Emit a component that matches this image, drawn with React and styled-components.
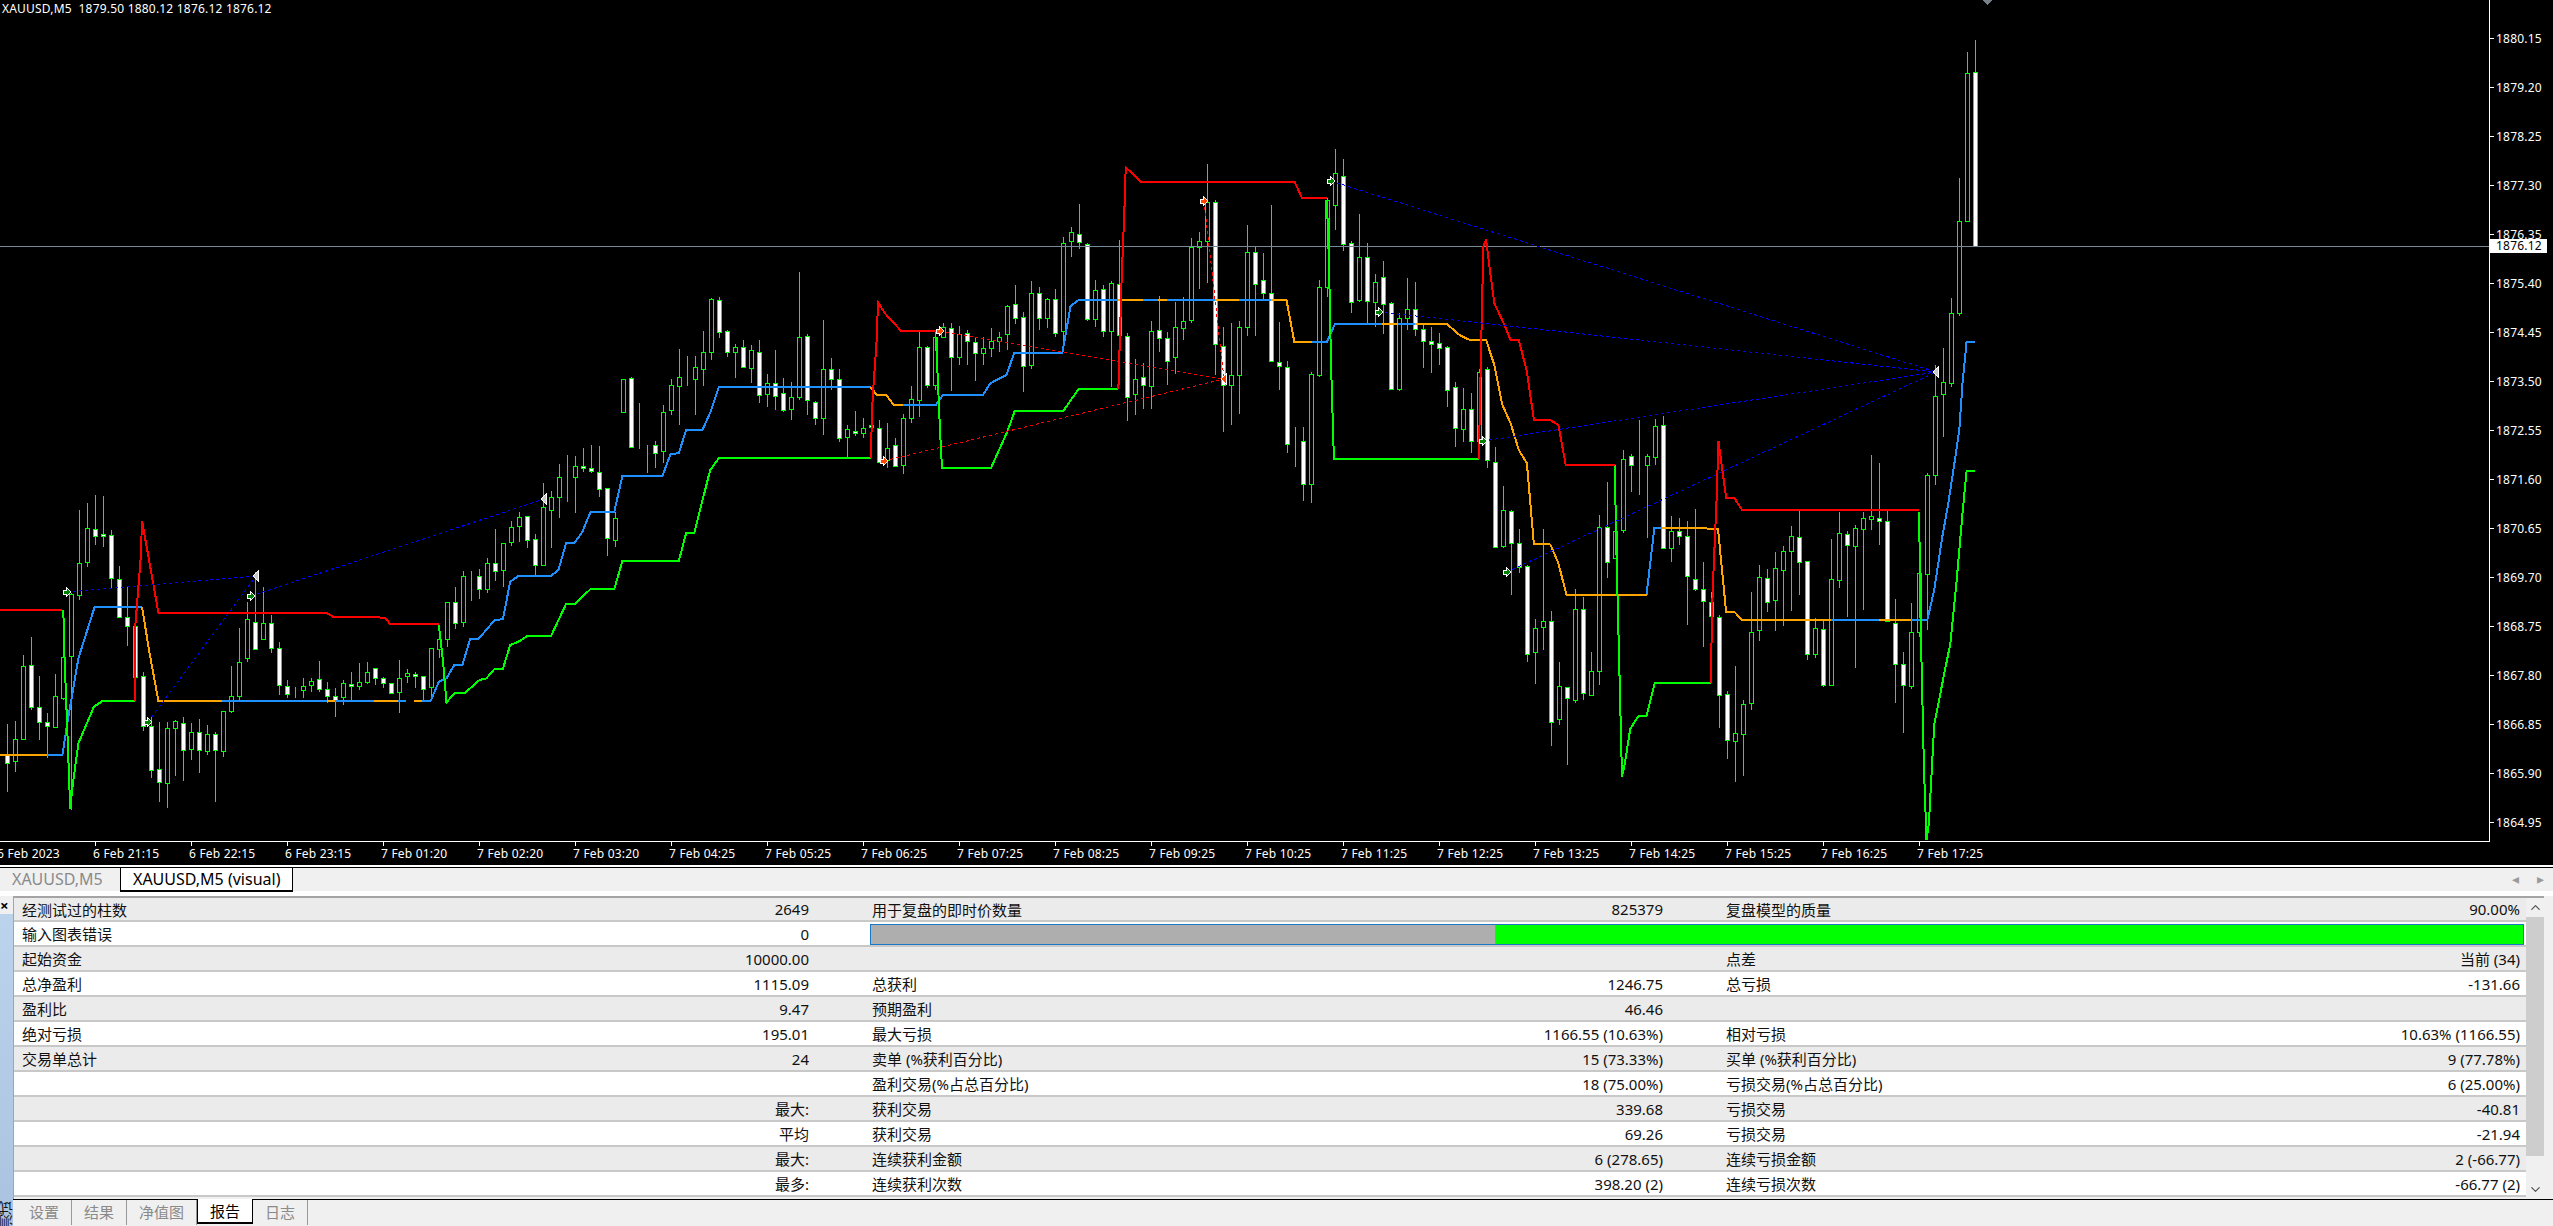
import React from "react";
import styled, { createGlobalStyle } from "styled-components";
import { ChevronUp, ChevronDown } from "lucide-react";

const W = 1;
const H = 0;

// [body type, wick top, body top, body bottom, wick bottom], y read per crop
const crop = (y0, rows) =>
  rows.map(([t, a, b, c, d]) => [t, y0 + a / 3, y0 + b / 3, y0 + c / 3, y0 + d / 3]);

const CANDLES = [
  ...crop(430, [
    [W, 883, 975, 998, 1085], [H, 873, 928, 995, 1025], [H, 675, 708, 928, 930], [W, 622, 706, 833, 840],
    [W, 738, 832, 877, 930], [W, 850, 877, 890, 985], [H, 733, 798, 890, 895], [H, 540, 680, 802, 810],
    [H, 490, 492, 678, 1140], [H, 240, 400, 497, 510], [H, 220, 295, 398, 412], [W, 195, 298, 320, 345],
    [W, 198, 313, 320, 350], [W, 300, 316, 446, 475], [W, 408, 448, 562, 565], [W, 470, 560, 587, 648],
    [W, 575, 587, 740, 745], [W, 725, 737, 888, 902], [W, 858, 887, 1020, 1045], [W, 875, 1018, 1057, 1115],
    [H, 875, 895, 1060, 1133], [H, 870, 873, 895, 1038], [W, 862, 878, 958, 1052], [H, 880, 907, 958, 990],
    [W, 868, 905, 958, 1030], [H, 885, 913, 965, 975], [W, 905, 913, 962, 1115], [H, 842, 842, 962, 980],
    [H, 708, 798, 843, 848], [H, 595, 697, 798, 810], [H, 516, 568, 685, 695], [W, 425, 575, 655, 658],
    [H, 470, 580, 628, 628], [W, 555, 580, 655, 670], [W, 635, 655, 765, 795], [W, 750, 767, 790, 805],
    [H, 770, 782, 782, 805], [H, 745, 767, 778, 805], [H, 745, 752, 765, 785], [W, 693, 748, 778, 785],
    [W, 755, 778, 800, 820], [W, 775, 797, 810, 862], [H, 750, 760, 803, 825], [W, 725, 762, 767, 810],
    [H, 700, 757, 770, 780], [H, 697, 727, 757, 762], [W, 713, 713, 742, 765], [W, 740, 743, 758, 775],
    [W, 758, 758, 787, 790], [H, 690, 745, 787, 850], [H, 717, 730, 740, 760], [W, 725, 732, 737, 775],
    [W, 737, 737, 775, 810], [H, 655, 655, 773, 805], [H, 590, 628, 658, 685], [H, 515, 515, 625, 652],
    [W, 472, 515, 577, 597], [H, 423, 438, 577, 592], [H, 423, 438, 438, 512], [W, 418, 438, 478, 507],
    [H, 385, 400, 478, 490], [W, 297, 400, 425, 452], [H, 340, 340, 422, 470], [H, 272, 292, 338, 348],
    [H, 247, 262, 290, 335], [W, 257, 257, 328, 355], [W, 312, 328, 407, 437], [H, 158, 232, 405, 408],
    [H, 183, 200, 238, 355], [H, 102, 140, 200, 265], [H, 75, 138, 138, 215], [H, 77, 107, 140, 248],
    [W, 55, 107, 112, 125], [W, 45, 115, 125, 128], [W, 48, 125, 175, 200], [W, 175, 175, 325, 378],
    [H, 245, 265, 332, 352], [H, -153, -153, -54, -54], [W, -160, -156, 50, 55], [H, -81, 50, 50, 58],
  ]),
  ...crop(130, [
    [H, 945, 952, 952, 1030], [W, 933, 945, 970, 1015], [H, 825, 845, 962, 1000], [H, 748, 766, 842, 855],
    [H, 657, 740, 767, 885], [H, 678, 742, 742, 768], [H, 678, 710, 745, 855], [H, 603, 665, 715, 768],
    [H, 505, 508, 667, 690], [W, 500, 510, 607, 625], [W, 600, 602, 664, 680], [H, 642, 650, 664, 745],
    [W, 630, 650, 710, 715], [H, 645, 660, 713, 760], [W, 630, 665, 793, 820], [H, 732, 758, 790, 830],
    [W, 660, 760, 800, 840], [W, 745, 790, 842, 845], [H, 755, 800, 835, 870], [H, 427, 620, 800, 810],
    [W, 612, 617, 808, 855], [W, 812, 815, 862, 885], [H, 570, 718, 865, 915], [W, 685, 718, 748, 780],
    [W, 717, 748, 925, 935], [H, 885, 898, 923, 985], [W, 843, 902, 907, 918], [H, 865, 893, 907, 925],
    [W, 820, 885, 892, 935], [W, 870, 893, 995, 1000], [H, 880, 955, 990, 1015], [W, 925, 945, 1008, 1010],
    [H, 852, 865, 1005, 1033], [H, 768, 808, 865, 880], [H, 607, 650, 808, 860], [W, 648, 650, 765, 775],
    [H, 605, 622, 765, 780], [H, 580, 592, 622, 625], [W, 580, 595, 682, 782], [H, 588, 613, 682, 705],
    [W, 600, 610, 635, 705], [W, 625, 637, 670, 752], [H, 622, 655, 670, 705], [H, 595, 633, 655, 682],
    [H, 605, 620, 632, 665], [H, 525, 527, 610, 660], [W, 465, 523, 565, 582], [W, 545, 560, 706, 785],
    [H, 453, 490, 707, 718], [W, 470, 490, 565, 600], [H, 505, 508, 565, 595], [W, 478, 508, 610, 622],
    [H, 322, 338, 602, 650], [H, 290, 307, 335, 380], [W, 222, 313, 338, 358], [W, 338, 342, 568, 572],
    [H, 450, 480, 568, 592], [W, 465, 478, 605, 620], [H, 452, 460, 605, 770], [W, 330, 463, 615, 650],
    [W, 610, 617, 800, 872], [H, 688, 748, 793, 855], [W, 700, 742, 767, 838], [H, 572, 602, 767, 838],
    [W, 498, 600, 625, 665], [W, 605, 625, 695, 765], [H, 517, 592, 683, 733], [H, 502, 572, 592, 630],
    [H, 325, 350, 568, 580], [H, 305, 332, 350, 478], [H, 102, 215, 333, 460], [W, 210, 215, 642, 735],
    [W, 592, 647, 765, 905], [H, 580, 735, 765, 885], [H, 572, 590, 733, 852], [H, 285, 365, 590, 618],
    [W, 352, 365, 460, 618], [W, 370, 450, 490, 510], [W, 225, 490, 693, 695], [W, 577, 695, 708, 780],
    [W, 692, 710, 940, 968], [H, 892, 937, 937, 1012], [W, 892, 932, 1060, 1112], [H, 727, 733, 1062, 1118],
    [H, 450, 472, 737, 740], [H, 205, 210, 470, 500], [H, 57, 130, 225, 300], [W, 87, 137, 340, 362],
    [W, 333, 340, 517, 548], [H, 252, 382, 510, 515], [W, 340, 380, 512, 580], [H, 432, 455, 515, 590],
    [W, 393, 442, 522, 612], [W, 515, 518, 775, 780], [H, 550, 565, 778, 782], [H, 445, 538, 565, 600],
    [W, 457, 538, 598, 618], [W, 585, 598, 634, 714], [W, 592, 632, 640, 730], [W, 608, 638, 652, 705],
    [W, 648, 650, 778, 830], [W, 755, 772, 895, 952], [H, 773, 838, 898, 937], [W, 790, 838, 935, 970],
    [H, 717, 727, 935, 985], [W, 712, 718, 990, 1015],
  ]),
  ...crop(430, [
    [W, 50, 95, 350, 355], [H, 168, 240, 347, 355], [W, 240, 242, 338, 495], [W, 298, 338, 410, 428],
    [W, 405, 407, 670, 695], [H, 568, 595, 667, 762], [H, 297, 573, 592, 660], [W, 543, 572, 875, 947],
    [H, 697, 768, 868, 885], [W, 770, 772, 806, 1005], [H, 478, 538, 810, 820], [W, 500, 538, 790, 810],
    [H, 667, 722, 793, 795], [H, 255, 290, 722, 765], [W, 155, 290, 395, 443], [H, 225, 302, 383, 383],
    [H, 60, 88, 302, 310], [W, 72, 78, 105, 185], [H, -30, 105, 105, 195], [H, 72, 78, 105, 325],
    [H, -32, -12, 82, 105], [W, -42, -14, 355, 358], [H, 257, 302, 352, 395], [W, 265, 302, 317, 345],
    [W, 272, 318, 438, 585], [W, 238, 447, 476, 483], [W, 397, 478, 513, 650], [W, 485, 517, 558, 560],
    [W, 555, 560, 793, 895], [W, 783, 793, 930, 987], [H, 708, 908, 932, 1055], [H, 810, 823, 913, 1037],
    [H, 485, 607, 820, 840], [H, 405, 440, 598, 632], [W, 418, 443, 515, 545], [H, 367, 415, 512, 603],
    [H, 347, 362, 418, 587], [H, 288, 317, 362, 543], [W, 243, 320, 395, 495], [W, 392, 392, 670, 690],
    [H, 565, 593, 670, 685], [W, 568, 598, 765, 770], [H, 327, 448, 765, 768], [H, 245, 308, 448, 475],
    [W, 303, 312, 346, 560], [H, 285, 295, 350, 715], [H, 245, 265, 298, 540], [H, 75, 257, 265, 300],
    [W, 98, 263, 272, 345], [W, 243, 272, 572, 575], [W, 508, 580, 703, 818], [W, 665, 703, 767, 908],
    [H, 520, 607, 770, 778], [H, 372, 430, 607, 620], [H, 130, 135, 433, 600],
  ]),
  [H, 365, 395.7, 475, 485],
  [H, 348, 382, 394, 437],
  [H, 298, 313, 383, 387],
  [H, 178, 221, 313, 316],
  [H, 52, 73, 221, 221],
  [W, 40, 72, 246, 246],
];

// crop coordinates to page coordinates
const at = (x0, y0, sx = 2.45) => (pts) => pts.map(([x, y]) => [x0 + x / sx, y0 + y / 3]);
const Z5 = at(0, 430);
const Z6 = at(640, 130);
const Z7 = at(1280, 130);
const Z9 = at(1280, 430);
const Z10 = at(1920, 430, 2.47);
const Z8 = at(1920, 0, 2.47);
const Z11 = at(640, 430);

const RED_LINES = [
  Z5([[0, 540], [153, 540]]),
  Z5([[330, 813], [330, 610], [345, 380], [348, 272], [388, 548], [800, 548], [815, 560], [918, 560], [945, 565], [955, 581], [1075, 581]]),
  Z6([[565, 985], [570, 800], [580, 630], [583, 517], [600, 550], [640, 603], [735, 603]]),
  Z6([[1172, 776], [1180, 450], [1188, 200], [1190, 112], [1228, 156], [1568, 156]]),
  Z7([[0, 156], [36, 156], [54, 204], [115, 204]]),
  Z7([[487, 987], [492, 700], [498, 350], [505, 328], [512, 400], [525, 520], [548, 580], [565, 630], [585, 630], [605, 725], [622, 870], [662, 870], [682, 885], [700, 1004], [820, 1004]]),
  Z9([[1055, 760], [1060, 480], [1070, 200], [1074, 32], [1093, 203], [1113, 203], [1132, 240], [1565, 240]]),
];

const GREEN_LINES = [
  Z5([[155, 540], [158, 680], [165, 900], [172, 1137], [178, 1065], [192, 940], [230, 830], [252, 812], [330, 812]]),
  Z5([[1075, 585], [1085, 690], [1094, 817], [1115, 788], [1140, 788], [1175, 750], [1192, 745], [1212, 716], [1232, 716], [1250, 645], [1270, 635], [1292, 618], [1350, 618], [1387, 522], [1408, 522], [1447, 477], [1505, 477], [1525, 393], [1568, 393]]),
  Z11([[0, 393], [95, 393], [113, 310], [133, 308], [172, 120], [193, 85], [565, 85]]),
  Z6([[725, 625], [730, 760], [735, 900], [740, 1014], [860, 1014], [900, 905], [918, 843], [1037, 843], [1075, 776], [1172, 776]]),
  Z7([[115, 210], [120, 400], [125, 700], [132, 987], [487, 987]]),
  Z9([[820, 104], [825, 400], [830, 650], [838, 1040], [845, 1000], [858, 897], [878, 858], [898, 858], [918, 760], [1055, 760]]),
  Z9([[1565, 245], [1568, 400]]).concat(Z10([[0, 500], [5, 760], [10, 1020], [16, 1230], [22, 1180], [35, 885], [60, 730], [75, 640], [90, 460], [105, 250], [115, 122], [135, 122]])),
];

const BLUE_LINES = [
  Z5([[115, 975], [153, 975], [165, 880], [192, 685], [232, 530], [348, 530]]),
  Z5([[545, 813], [800, 813]]),
  Z5([[820, 813], [917, 813]]),
  Z5([[975, 813], [995, 813]]),
  Z5([[1035, 813], [1055, 813], [1075, 755], [1094, 745], [1113, 705], [1133, 705], [1152, 627], [1172, 627], [1212, 570], [1232, 568], [1250, 455], [1270, 438], [1350, 438], [1368, 420], [1387, 340], [1408, 338], [1427, 305], [1447, 245], [1505, 245], [1525, 138], [1568, 138]]),
  Z6([[0, 1038], [55, 1038], [75, 972], [95, 970], [113, 900], [153, 900], [173, 845], [193, 771], [565, 771]]),
  Z6([[645, 825], [725, 825], [742, 795], [840, 795], [858, 760], [898, 735], [917, 668], [1035, 668], [1055, 528], [1075, 510], [1172, 510]]),
  Z6([[1232, 510], [1270, 510]]),
  Z6([[1290, 510], [1408, 510]]),
  Z6([[1467, 510], [1545, 510]]),
  Z7([[78, 635], [115, 635], [135, 581], [250, 581]]),
  Z7([[290, 581], [330, 581]]),
  Z9([[898, 495], [917, 295], [935, 295]]),
  Z9([[1350, 570], [1467, 570]]),
  Z9([[1545, 570], [1568, 570]]).concat(
    Z10([[5, 570], [18, 570], [35, 480], [55, 320], [70, 220], [85, 100], [97, 0]]),
    Z8([[105, 1150], [115, 1025], [135, 1025]])
  ),
];

const ORANGE_LINES = [
  Z5([[0, 975], [115, 975]]),
  Z5([[348, 530], [365, 660], [388, 813], [545, 813]]),
  Z5([[800, 813], [820, 813]]),
  Z5([[917, 813], [975, 813]]),
  Z5([[1015, 813], [1035, 813]]),
  Z6([[565, 771], [580, 795], [603, 795], [622, 825], [645, 825]]),
  Z6([[1172, 510], [1232, 510]]),
  Z6([[1270, 510], [1290, 510]]),
  Z6([[1408, 510], [1467, 510]]),
  Z6([[1545, 510], [1568, 510]]),
  Z7([[0, 510], [16, 510], [35, 635], [78, 635]]),
  Z7([[250, 581], [290, 581]]),
  Z7([[330, 581], [408, 581], [440, 615], [465, 630], [505, 630], [525, 705], [545, 825], [565, 880], [585, 960], [605, 1000], [622, 1242], [662, 1242]]),
  Z9([[662, 342], [682, 400], [702, 495], [898, 495]]),
  Z9([[935, 295], [1035, 295], [1073, 297], [1093, 545], [1113, 545], [1132, 570], [1350, 570]]),
  Z9([[1467, 570], [1545, 570]]),
];

const BUY_TRADES = [
  [67, 592, 256, 576],
  [148, 722, 256, 576],
  [251, 596, 544, 499],
  [1331, 181, 1936, 372],
  [1379, 312, 1936, 372],
  [1483, 441, 1936, 372],
  [1507, 572, 1936, 372],
];

const SELL_TRADES = [
  [884, 461, 1224, 379],
  [940, 331, 1224, 379],
  [1204, 201, 1224, 379],
];

const PRICES = [
  "1880.15", "1879.20", "1878.25", "1877.30", "1876.35", "1875.40", "1874.45", "1873.50", "1872.55",
  "1871.60", "1870.65", "1869.70", "1868.75", "1867.80", "1866.85", "1865.90", "1864.95",
];

const TIMES = [
  "6 Feb 2023", "6 Feb 21:15", "6 Feb 22:15", "6 Feb 23:15", "7 Feb 01:20", "7 Feb 02:20", "7 Feb 03:20",
  "7 Feb 04:25", "7 Feb 05:25", "7 Feb 06:25", "7 Feb 07:25", "7 Feb 08:25", "7 Feb 09:25", "7 Feb 10:25",
  "7 Feb 11:25", "7 Feb 12:25", "7 Feb 13:25", "7 Feb 14:25", "7 Feb 15:25", "7 Feb 16:25", "7 Feb 17:25",
];

const REPORT = [
  [["经测试过的柱数", "2649"], ["用于复盘的即时价数量", "825379"], ["复盘模型的质量", "90.00%"]],
  [["输入图表错误", "0"]],
  [["起始资金", "10000.00"], ["", ""], ["点差", "当前 (34)"]],
  [["总净盈利", "1115.09"], ["总获利", "1246.75"], ["总亏损", "-131.66"]],
  [["盈利比", "9.47"], ["预期盈利", "46.46"], ["", ""]],
  [["绝对亏损", "195.01"], ["最大亏损", "1166.55 (10.63%)"], ["相对亏损", "10.63% (1166.55)"]],
  [["交易单总计", "24"], ["卖单 (%获利百分比)", "15 (73.33%)"], ["买单 (%获利百分比)", "9 (77.78%)"]],
  [["", ""], ["盈利交易(%占总百分比)", "18 (75.00%)"], ["亏损交易(%占总百分比)", "6 (25.00%)"]],
  [["", "最大:"], ["获利交易", "339.68"], ["亏损交易", "-40.81"]],
  [["", "平均"], ["获利交易", "69.26"], ["亏损交易", "-21.94"]],
  [["", "最大:"], ["连续获利金额", "6 (278.65)"], ["连续亏损金额", "2 (-66.77)"]],
  [["", "最多:"], ["连续获利次数", "398.20 (2)"], ["连续亏损次数", "-66.77 (2)"]],
];

const BOTTOM_TABS = ["设置", "结果", "净值图", "报告", "日志"];

const toPoints = (pts) => pts.map(([x, y]) => `${x.toFixed(1)},${y.toFixed(1)}`).join(" ");

function Candle({ bar, index }) {
  const [type, top, bodyTop, bodyBottom, bottom] = bar;
  const x = 7 + index * 8;
  return (
    <g>
      <line x1={x + 0.5} x2={x + 0.5} y1={top} y2={bottom} stroke="#00ff00" />
      <rect
        x={x - 1.5}
        y={Math.round(bodyTop) + 0.5}
        width={4}
        height={Math.max(Math.round(bodyBottom - bodyTop), 0)}
        fill={type === W ? "#ffffff" : "#000000"}
        stroke="#00ff00"
      />
    </g>
  );
}

function Band({ lines, color }) {
  return lines.map((pts, i) => (
    <polyline key={i} points={toPoints(pts)} fill="none" stroke={color} strokeWidth={2} />
  ));
}

function EntryArrow({ x, y, color }) {
  return (
    <path
      transform={`translate(${x} ${y})`}
      d="M-4 -2 H-1 V-5 L4 0 L-1 5 V2 H-4 Z"
      fill={color}
      stroke="#ffffff"
    />
  );
}

function Trades({ trades, color, arrow }) {
  return (
    <g>
      {trades.map(([x1, y1, x2, y2]) => (
        <line
          key={`${x1}-${y1}`}
          x1={x1}
          y1={y1}
          x2={x2}
          y2={y2}
          stroke={color}
          strokeDasharray="3 3"
        />
      ))}
      {trades.map(([x1, y1]) => (
        <EntryArrow key={`${x1}-${y1}`} x={x1} y={y1} color={arrow} />
      ))}
    </g>
  );
}

function ExitMark({ x, y, fill }) {
  return (
    <path
      transform={`translate(${x} ${y})`}
      d="M-3 0 L2 -5 V5 Z"
      fill={fill}
      stroke="#ffffff"
    />
  );
}

function PriceChart() {
  return (
    <Plot width={2489} height={841} viewBox="0 0 2489 841" shapeRendering="crispEdges">
      {CANDLES.map((bar, i) => (
        <Candle key={i} bar={bar} index={i} />
      ))}
      <line x1={0} x2={2489} y1={246.5} y2={246.5} stroke="#778899" />
      <polygon points="1983,0 1992,0 1987.5,5" fill="#778088" />
      <Band lines={BLUE_LINES} color="#1e90ff" />
      <Band lines={ORANGE_LINES} color="#ffa500" />
      <Band lines={GREEN_LINES} color="#00ff00" />
      <Band lines={RED_LINES} color="#ff0000" />
      <Trades trades={BUY_TRADES} color="#0000ff" arrow="#008000" />
      <Trades trades={SELL_TRADES} color="#ff0000" arrow="#ff4500" />
      <ExitMark x={256} y={576} fill="#c8c8c8" />
      <ExitMark x={544} y={499} fill="#c8c8c8" />
      <ExitMark x={1936} y={372} fill="#c8c8c8" />
      <ExitMark x={1224} y={379} fill="#ff4500" />
    </Plot>
  );
}

export default function App() {
  return (
    <Page>
      <GlobalStyle />
      <ChartPane>
        <PriceChart />
        <Legend>XAUUSD,M5&nbsp; 1879.50 1880.12 1876.12 1876.12</Legend>
        <PriceAxis>
          {PRICES.map((p) => (
            <PriceLabel key={p}>{p}</PriceLabel>
          ))}
          <PriceBadge>1876.12</PriceBadge>
        </PriceAxis>
        <TimeAxis>
          {TIMES.map((t) => (
            <TimeLabel key={t}>{t}</TimeLabel>
          ))}
        </TimeAxis>
      </ChartPane>

      <ChartTabs>
        <ChartTab>XAUUSD,M5</ChartTab>
        <ChartTab $active>XAUUSD,M5 (visual)</ChartTab>
        <TabArrows>
          <span>◂</span>
          <span>▸</span>
        </TabArrows>
      </ChartTabs>

      <Terminal>
        <SideBar>
          <CloseMark>×</CloseMark>
          <SideTitle>
            <span>测试</span>
          </SideTitle>
        </SideBar>
        <Main>
          <ReportArea>
            <Report>
              {REPORT.map((row, i) => (
                <Row key={i}>
                  {row.map(([label, value], j) => (
                    <Cell key={j}>
                      <span>{label}</span>
                      <span>{value}</span>
                    </Cell>
                  ))}
                  {row.length === 1 && (
                    <QualityCell>
                      <QualityBar>
                        <QualityPart $color="#aeaeae" $width={624} />
                        <QualityPart $color="#00ff00" />
                      </QualityBar>
                    </QualityCell>
                  )}
                </Row>
              ))}
            </Report>
            <ScrollBar>
              <ScrollArrow>
                <ChevronUp size={15} strokeWidth={2} />
              </ScrollArrow>
              <ScrollThumb />
              <ScrollArrow>
                <ChevronDown size={15} strokeWidth={2} />
              </ScrollArrow>
            </ScrollBar>
          </ReportArea>
          <BottomTabs>
            {BOTTOM_TABS.map((t) => (
              <BottomTab key={t} $active={t === "报告"}>
                {t}
              </BottomTab>
            ))}
          </BottomTabs>
        </Main>
      </Terminal>
    </Page>
  );
}

const GlobalStyle = createGlobalStyle`
  html, body {
    margin: 0;
    background: #f0f0f0;
    overflow: hidden;
  }
  * {
    box-sizing: border-box;
  }
`;

const FONT = `"Noto Sans", "Noto Sans CJK SC", sans-serif`;

const Page = styled.div`
  width: 2553px;
  height: 1226px;
  display: flex;
  flex-direction: column;
  overflow: hidden;
  font-family: ${FONT};
`;

const ChartPane = styled.section`
  position: relative;
  flex: none;
  height: 867px;
  display: grid;
  grid-template-columns: 2490px 63px;
  grid-template-rows: 842px 23px;
  background: #000;
  border-bottom: 2px solid #fff;
  overflow: hidden;
  color: #fff;
  font-size: 12px;
  letter-spacing: 0.2px;
`;

const Plot = styled.svg`
  display: block;
  width: 2490px;
  height: 842px;
  border-right: 1px solid #fff;
  border-bottom: 1px solid #fff;
`;

const Legend = styled.div`
  position: absolute;
  left: 2px;
  top: 0;
  line-height: 18px;
  white-space: pre;
`;

const PriceAxis = styled.div`
  position: relative;
  display: flex;
  flex-direction: column;
  padding-top: 14px;
`;

const PriceLabel = styled.div`
  position: relative;
  flex: none;
  height: 49px;
  line-height: 49px;
  padding-left: 6px;

  &::before {
    content: "";
    position: absolute;
    left: -1px;
    top: 24px;
    width: 5px;
    height: 1px;
    background: #fff;
  }
`;

const PriceBadge = styled.div`
  position: absolute;
  left: 0;
  top: 239px;
  width: 57px;
  height: 14px;
  line-height: 14px;
  padding-left: 6px;
  background: #fff;
  color: #000;
`;

const TimeAxis = styled.div`
  grid-column: 1 / -1;
  display: flex;
  margin-left: -3px;
`;

const TimeLabel = styled.div`
  position: relative;
  flex: none;
  width: 96px;
  line-height: 23px;
  white-space: nowrap;

  &::before {
    content: "";
    position: absolute;
    left: 2px;
    top: 0;
    width: 1px;
    height: 4px;
    background: #fff;
  }
`;

const ChartTabs = styled.div`
  flex: none;
  height: 29px;
  display: flex;
  align-items: flex-start;
  border-top: 1px solid #000;
  border-bottom: 5px solid #fff;
  background: #f0f0f0;
  font-size: 16px;
`;

const ChartTab = styled.div`
  height: 24px;
  line-height: 22px;
  padding: 0 12px;
  color: ${({ $active }) => ($active ? "#000" : "#8a8a8a")};
  background: ${({ $active }) => ($active ? "#fff" : "transparent")};
  border: ${({ $active }) => ($active ? "1px solid #000" : "none")};
  border-top: none;
  border-bottom-width: ${({ $active }) => ($active ? "2px" : "0")};
  ${({ $active }) => ($active ? "" : "width: 120px;")}
`;

const TabArrows = styled.div`
  margin-left: auto;
  display: flex;
  gap: 18px;
  padding-right: 9px;
  color: #9a9a9a;
  font-size: 14px;
  line-height: 22px;
`;

const Terminal = styled.div`
  flex: 1;
  min-height: 0;
  display: flex;
  background: #f0f0f0;
  font-size: 15px;
  color: #111;
`;

const SideBar = styled.aside`
  flex: none;
  width: 13px;
  display: flex;
  flex-direction: column;
`;

const CloseMark = styled.div`
  flex: none;
  height: 18px;
  line-height: 19px;
  font-size: 15px;
  font-weight: 700;
  color: #000;
`;

const SideTitle = styled.div`
  flex: 1;
  display: flex;
  justify-content: flex-end;
  align-items: flex-end;
  flex-direction: column;
  background: linear-gradient(#bcd3ec, #a9c3e0);
  overflow: hidden;

  span {
    writing-mode: vertical-rl;
    transform: rotate(180deg);
    font-size: 14px;
    line-height: 13px;
    margin-bottom: -3px;
  }
`;

const Main = styled.div`
  flex: 1;
  min-width: 0;
  display: flex;
  flex-direction: column;
`;

const ReportArea = styled.div`
  flex: none;
  height: 304px;
  display: flex;
  padding-right: 9px;
  border-bottom: 1px solid #000;
`;

const Report = styled.div`
  flex: none;
  width: 2513px;
  border-top: 2px solid #a4a4a4;
  border-left: 1px solid #a4a4a4;
`;

const Row = styled.div`
  height: 25px;
  display: grid;
  grid-template-columns: 850px 854px 808px;
  border-bottom: 2px solid #c8c8c8;
  background: #fff;

  &:nth-child(odd) {
    background: #ebebeb;
  }
  &:nth-child(1) {
    height: 24px;
  }
`;

const Cell = styled.div`
  display: flex;
  justify-content: space-between;
  align-items: center;
  padding: 0 55px 0 8px;
  white-space: nowrap;

  &:last-child {
    padding-right: 6px;
  }
`;

const QualityCell = styled.div`
  grid-column: 2 / 4;
  padding: 2px 2px 0 6px;
`;

const QualityBar = styled.div`
  height: 21px;
  display: flex;
  border: 1px solid #1a78c8;
`;

const QualityPart = styled.div`
  flex: ${({ $width }) => ($width ? `none` : 1)};
  width: ${({ $width }) => ($width ? `${$width}px` : "auto")};
  background: ${({ $color }) => $color};
`;

const ScrollBar = styled.div`
  flex: none;
  width: 18px;
  display: flex;
  flex-direction: column;
  border-top: 2px solid #a4a4a4;
`;

const ScrollArrow = styled.div`
  flex: none;
  height: 19px;
  display: flex;
  align-items: center;
  justify-content: center;
  color: #555;
`;

const ScrollThumb = styled.div`
  flex: none;
  height: 239px;
  background: #cdcdcd;
  margin-bottom: auto;
`;

const BottomTabs = styled.div`
  flex: 1;
  display: flex;
  padding-left: 4px;
`;

const BottomTab = styled.div`
  position: relative;
  padding: 0 12px;
  height: 25px;
  line-height: 24px;
  margin-top: ${({ $active }) => ($active ? "-1px" : "0")};
  color: ${({ $active }) => ($active ? "#000" : "#8a8a8a")};
  background: ${({ $active }) => ($active ? "#fff" : "transparent")};
  border-right: 1px solid ${({ $active }) => ($active ? "#000" : "#999")};
  border-left: ${({ $active }) => ($active ? "1px solid #000" : "none")};
  border-bottom: ${({ $active }) => ($active ? "2px solid #000" : "none")};
`;
